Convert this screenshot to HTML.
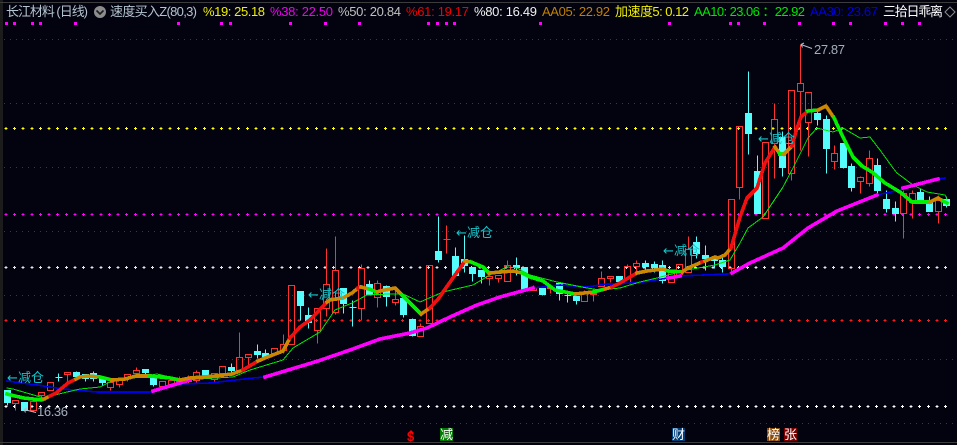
<!DOCTYPE html>
<html lang="zh"><head><meta charset="utf-8"><title>长江材料 (日线)</title>
<style>
html,body{margin:0;padding:0;background:#02030f;}
svg{display:block;position:absolute;left:0;top:0;}
text{font-family:"Liberation Sans","Noto Sans CJK SC",sans-serif;font-size:13px;white-space:pre;}
</style></head>
<body>
<svg width="957" height="445" viewBox="0 0 957 445" xmlns="http://www.w3.org/2000/svg">
<rect width="957" height="445" fill="#02030f"/>
<rect x="0" y="0" width="3" height="445" fill="#1c1c1c"/>
<rect x="0" y="2" width="957" height="1" fill="#3c3c3c"/>
<rect x="0" y="442" width="957" height="1" fill="#3c3c3c"/>

<!-- grid -->
<g stroke="#3a3a3a" stroke-width="1" stroke-dasharray="1 5" shape-rendering="crispEdges">
<path d="M4 39.5H957M4 103.5H957M4 167.5H957M4 231.5H957M4 295.5H957M4 359.5H957M4 423.5H957"/>
</g>

<!-- top markers -->
<path fill="#ff00ff" d="M5 22h3v3h-3zM13 22h3v3h-3zM31 22h3v3h-3zM39 22h3v3h-3zM74 22h3v3h-3zM177 22h3v3h-3zM220 22h3v3h-3zM229 22h3v3h-3zM289 22h3v3h-3zM324 22h3v3h-3zM358 22h3v3h-3zM427 22h3v3h-3zM436 22h3v3h-3zM445 22h3v3h-3zM453 22h3v3h-3zM539 22h3v3h-3zM668 22h3v3h-3zM729 22h3v3h-3zM737 22h3v3h-3zM763 22h3v3h-3zM798 22h3v3h-3zM832 22h3v3h-3zM849 22h3v3h-3zM884 22h3v3h-3zM901 22h3v3h-3zM918 22h3v3h-3z"/>

<!-- cross level lines -->
<g shape-rendering="crispEdges" fill="none">
<g stroke="#ffff00"><path d="M4.5 128.5H950" stroke-dasharray="3 5.62"/><path d="M5.5 128.5H950" stroke-width="3" stroke-dasharray="1 7.62"/></g>
<g stroke="#ff00ff"><path d="M4.5 214.5H950" stroke-dasharray="3 5.62"/><path d="M5.5 214.5H950" stroke-width="3" stroke-dasharray="1 7.62"/></g>
<g stroke="#e6e6e6"><path d="M4.5 267.5H950" stroke-dasharray="3 5.62"/><path d="M5.5 267.5H950" stroke-width="3" stroke-dasharray="1 7.62"/></g>
<g stroke="#ff1a1a"><path d="M4.5 320.5H950" stroke-dasharray="3 5.62"/><path d="M5.5 320.5H950" stroke-width="3" stroke-dasharray="1 7.62"/></g>
<g stroke="#ffffff"><path d="M4.5 406.5H950" stroke-dasharray="3 5.62"/><path d="M5.5 406.5H950" stroke-width="3" stroke-dasharray="1 7.62"/></g>
</g>

<!-- candles -->
<g transform="translate(.5 .5)" shape-rendering="crispEdges">
<path fill="none" stroke="#ff3232" d="
M12 400h6V403h-6zM15 403V410
M30 401h6V410h-6zM33 410V412
M38 392h6V395h-6zM41 395V400
M47 382h6V390h-6z
M64 372h6V374h-6zM67 374V381
M107 382h6V387h-6zM110 380V382M110 387V390
M116 380h6V384h-6zM119 384V387
M124 374h6V378h-6zM127 378V381
M133 370h6V373h-6zM136 367V370M136 373V377
M159 381h6V386h-6zM162 386V388
M168 380h6V384h-6zM171 377V380M171 384V387
M176 379h6V381h-6zM179 376V379M179 381V384
M185 378h6V381h-6zM188 375V378M188 381V384
M193 372h6V380h-6zM196 370V372M196 380V382
M211 373h6V379h-6zM214 379V381
M219 366h6V373h-6z
M236 357h6V370h-6zM239 332V357
M245 354h6V357h-6zM248 357V367
M271 348h6V353h-6z
M280 344h6V350h-6zM283 334V344M283 350V353
M288 285h6V344h-6z
M314 308h6V330h-6zM317 330V343
M323 284h6V308h-6zM326 248V284M326 308V316
M332 270h6V312h-6zM335 236V270M335 312V314
M358 268h6V308h-6zM361 264V268M361 308V320
M374 283h6V297h-6zM377 280V283M377 297V307
M392 299h6V302h-6zM395 287V299M395 302V305
M417 326h6V336h-6zM420 323V326
M426 265h6V323h-6z
M446 225V253M443 239h7
M486 276h6V278h-6zM489 278V285
M495 275h6V278h-6zM498 278V282
M504 265h6V281h-6zM507 260V265
M530 287h6V290h-6zM533 285V287
M547 287h6V288h-6zM550 288V293
M581 292h6V301h-6zM584 290V292
M590 293h6V294h-6zM593 288V293M593 294V301
M598 278h6V286h-6zM601 271V278
M607 276h6V278h-6zM610 278V282
M624 266h6V283h-6zM627 264V266
M633 263h6V266h-6zM636 260V263M636 266V275
M668 272h6V282h-6z
M676 264h6V275h-6z
M685 249h6V272h-6zM688 236V249
M728 199h6V268h-6zM731 268V272
M736 126h6V187h-6zM739 187V199
M762 142h6V218h-6z
M771 119h6V143h-6zM774 103V119M774 143V178
M788 90h6V173h-6zM791 173V180
M797 83h6V91h-6zM800 44V83M800 91V150
M805 92h6V122h-6zM808 122V156
M831 153h6V161h-6zM834 145V153M834 161V169
M857 177h6V181h-6zM860 176V177M860 181V193
M866 158h6V183h-6zM869 150V158M869 183V186
M900 193h6V213h-6zM903 190V193M903 213V238
M909 193h6V202h-6zM912 190V193M912 202V218
M935 200h6V211h-6zM938 195V200M938 211V223"/>
<path fill="#54fcfc" stroke="#54fcfc" d="
M4 390h6V402h-6zM7 402V405
M21 402h6V410h-6z
M58 373V381M55 377h7
M73 372h6V376h-6zM76 371V380
M82 374h6V378h-6zM85 378V381
M90 373h6V378h-6zM93 371V381
M99 378h6V382h-6zM102 382V385
M142 369h6V372h-6zM145 372V376
M150 378h6V384h-6zM153 384V386
M202 370h6V376h-6z
M228 367h6V370h-6zM231 363V372
M254 351h6V354h-6zM257 344V358
M262 353h6V356h-6zM265 349V358
M297 291h6V305h-6zM300 305V320
M305 315h6V322h-6zM308 307V328
M340 288h6V303h-6zM343 303V313
M352 300V326M349 307h7
M366 284h6V294h-6zM369 280V284
M383 286h6V296h-6zM386 285V306
M400 298h6V314h-6zM403 314V317
M409 319h6V335h-6zM412 318V336
M435 251h6V259h-6zM438 216V262
M452 256h6V275h-6zM455 247V256
M461 259h6V265h-6zM464 235V272
M469 267h6V273h-6zM472 273V281
M478 270h6V276h-6zM481 276V283
M513 265h6V267h-6zM516 257V275
M521 267h6V289h-6z
M539 288h6V294h-6zM542 294V295
M556 283h6V293h-6zM559 293V300
M567 290V302M564 295h7
M573 296h6V300h-6zM576 300V304
M616 276h6V281h-6z
M642 263h6V266h-6zM645 260V270
M651 264h6V267h-6zM654 261V272
M659 265h6V280h-6zM662 260V283
M693 242h6V253h-6zM696 236V258
M702 255h6V258h-6zM705 245V270
M711 257h6V260h-6zM714 255V268
M719 260h6V266h-6zM722 256V272
M745 113h6V133h-6zM748 71V154
M754 171h6V213h-6zM757 155V171
M779 137h6V167h-6zM782 131V176
M814 113h6V119h-6zM817 110V125
M823 119h6V148h-6zM826 115V173
M840 143h6V167h-6zM843 167V168
M848 166h6V187h-6zM851 163V191
M874 165h6V190h-6zM877 158V193
M883 199h6V208h-6zM886 190V212
M892 208h6V213h-6zM895 201V221
M917 192h6V200h-6zM920 188V192
M926 202h6V211h-6zM929 196V202
M943 199h6V205h-6zM946 196V207"/>
</g>

<!-- moving averages -->
<g fill="none" stroke-linejoin="round" stroke-linecap="square" shape-rendering="crispEdges">
<polyline stroke="#0000e6" stroke-width="1.6" points="7,381 37,385 63,389 97,392 150,392 153,391 180,384 210,383 253,378 265,377"/>
<polyline stroke="#0000e6" stroke-width="1.6" points="533,288 560,285 587,287 607,284 617,284 643,282 668,278 680,276 727,274 732,273"/>
<polyline stroke="#0000e6" stroke-width="1.6" points="877,195 900,190 903,188 938,179 945,178"/>
<polyline stroke="#00e600" stroke-width="1" points="7,388 13,389 37,396 43,398 63,393 80,389 100,387 110,382 157,374 183,380 233,377 250,370 283,360 293,348 320,332 335,310 352,303 367,295 390,294 403,294 420,302 443,292 473,285 490,275 507,267 517,268 530,275 557,282 587,288 600,290 620,288 640,282 657,278 687,270 715,265 730,260 740,243 748,228 763,217 783,187 793,168 808,138 817,128 833,132 843,128 860,138 870,137 880,150 893,168 897,173 913,185 927,192 945,195 947,199"/>
<g stroke="#ff00ff" stroke-width="3.6">
<polyline points="153,391 190,380"/>
<polyline points="265,377 318,361 350,350 380,339 410,333 427,328 450,317 477,305 500,297 533,288"/>
<polyline points="668,278 680,276"/>
<polyline points="732,273 750,263 783,248 808,228 837,211 877,195"/>
<polyline points="903,188 938,179"/>
</g>
<g stroke-width="3.6">
<polyline stroke="#00f000" points="7,394 15,396 24,398 33,399 41,400 44,399"/>
<polyline stroke="#cc8800" points="44,399 50,396"/>
<polyline stroke="#f01010" points="50,396 56,393 62,388 68,383 76,379"/>
<polyline stroke="#cc8800" points="76,379 80,377 88,376 100,377"/>
<polyline stroke="#00f000" points="100,377 104,378 112,380"/>
<polyline stroke="#cc8800" points="112,380 125,379 136,376 150,376"/>
<polyline stroke="#00f000" points="150,376 170,378 180,380"/>
<polyline stroke="#cc8800" points="180,380 190,378 215,376 232,374 243,370"/>
<polyline stroke="#f01010" points="243,370 258,361"/>
<polyline stroke="#cc8800" points="258,361 265,358 283,351 290,338"/>
<polyline stroke="#f01010" points="290,338 300,327 310,320 327,302"/>
<polyline stroke="#cc8800" points="327,302 330,300 343,298 352,293 358,288"/>
<polyline stroke="#f01010" points="358,288 361,287"/>
<polyline stroke="#cc8800" points="361,287 369,289"/>
<polyline stroke="#00f000" points="369,289 377,292"/>
<polyline stroke="#cc8800" points="377,292 380,291 395,288 402,295"/>
<polyline stroke="#00f000" points="402,295 421,314"/>
<polyline stroke="#cc8800" points="421,314 430,308"/>
<polyline stroke="#f01010" points="430,308 439,298 443,292 465,261"/>
<polyline stroke="#cc8800" points="465,261 471,262"/>
<polyline stroke="#00f000" points="471,262 483,267 489,273"/>
<polyline stroke="#cc8800" points="489,273 513,271 522,273"/>
<polyline stroke="#00f000" points="522,273 530,277 543,281 555,290 575,294"/>
<polyline stroke="#cc8800" points="575,294 593,292"/>
<polyline stroke="#00f000" points="593,292 605,289"/>
<polyline stroke="#cc8800" points="605,289 612,287"/>
<polyline stroke="#f01010" points="612,287 620,283 630,277 637,273"/>
<polyline stroke="#cc8800" points="637,273 647,271 663,269 668,271"/>
<polyline stroke="#00f000" points="668,271 682,272"/>
<polyline stroke="#cc8800" points="682,272 688,268 702,262"/>
<polyline stroke="#f01010" points="702,262 705,261"/>
<polyline stroke="#cc8800" points="705,261 715,257 718,258 725,255 731,248"/>
<polyline stroke="#f01010" points="731,248 740,217 747,198 757,188 765,163 775,147"/>
<polyline stroke="#cc8800" points="775,147 780,154"/>
<polyline stroke="#00f000" points="780,154 784,154"/>
<polyline stroke="#cc8800" points="784,154 792,146"/>
<polyline stroke="#f01010" points="792,146 797,128 801,117 808,111"/>
<polyline stroke="#00f000" points="808,111 818,110"/>
<polyline stroke="#cc8800" points="818,110 826,106 834,118"/>
<polyline stroke="#00f000" points="834,118 843,137 853,157 862,166 872,172 885,183 900,192 912,202 930,202"/>
<polyline stroke="#cc8800" points="930,202 938,198 943,201"/>
<polyline stroke="#00f000" points="943,201 947,203"/>
</g>
</g>

<!-- annotations -->
<g fill="#19c3c8">
<text x="7" y="382" font-family="DejaVu Sans" style="font-family:'DejaVu Sans',sans-serif" textLength="11">←</text><text x="18" y="382" textLength="26">减仓</text>
<text x="308" y="299" style="font-family:'DejaVu Sans',sans-serif" textLength="11">←</text><text x="319" y="299" textLength="26">减仓</text>
<text x="456" y="237" style="font-family:'DejaVu Sans',sans-serif" textLength="11">←</text><text x="467" y="237" textLength="26">减仓</text>
<text x="663" y="255" style="font-family:'DejaVu Sans',sans-serif" textLength="11">←</text><text x="674" y="255" textLength="26">减仓</text>
<text x="758" y="143" style="font-family:'DejaVu Sans',sans-serif" textLength="11">←</text><text x="769" y="143" textLength="26">减仓</text>
</g>
<g fill="none" stroke="#b4bcc8" stroke-width="1">
<path d="M801 44.5l11 4M801 44.5l3-1.5M801 44.5l1.5 3"/>
<path d="M24 409.5l12 3M24 409.5l3-1.5M24 409.5l1.5 3"/>
</g>
<text x="814" y="54" fill="#a4aeba" textLength="31">27.87</text>
<text x="37" y="416" fill="#a4aeba" textLength="31">16.36</text>

<!-- header -->
<text x="6" y="16" fill="#b4c4d0" textLength="82">长江材料 (日线)</text>
<circle cx="100" cy="12" r="6" fill="#8c8c8c"/>
<path d="M96.5 10.5l3.5 3.5 3.5-3.5" fill="none" stroke="#1c1c1c" stroke-width="1.6"/>
<text x="110" y="16" fill="#b4c4d0" textLength="87">速度买入Z(80,3)</text>
<text x="203" y="16" fill="#f0f000" textLength="62">%19: 25.18</text>
<text x="270" y="16" fill="#f000f0" textLength="63">%38: 22.50</text>
<text x="338" y="16" fill="#c0c0c0" textLength="63">%50: 20.84</text>
<text x="406" y="16" fill="#f00000" textLength="63">%61: 19.17</text>
<text x="474" y="16" fill="#f0f0f0" textLength="63">%80: 16.49</text>
<text x="542" y="16" fill="#c08000" textLength="68">AA05: 22.92</text>
<text x="615" y="16" fill="#f0f000" textLength="74">加速度5: 0.12</text>
<text x="694" y="16" fill="#00e600" textLength="111">AA10: 23.06 ：22.92</text>
<text x="810" y="16" fill="#0000e0" textLength="68">AA30: 23.67</text>
<text x="883" y="16" fill="#ffffff" textLength="60">三拾日乖离</text>
<path d="M945 12l5-5 5 5-5 5z" fill="none" stroke="#8c8c8c"/>

<!-- bottom badges -->
<text x="407" y="441" fill="#ff0000" font-weight="bold" textLength="8">$</text>
<path d="M411 430l-3 3h6z" fill="#ff0000"/>
<rect x="440" y="428" width="13" height="13" fill="#007a00"/>
<rect x="672" y="428" width="13" height="13" fill="#003c78"/>
<rect x="767" y="428" width="13" height="13" fill="#8b4a0a"/>
<rect x="784" y="428" width="13" height="13" fill="#7a0000"/>
<g fill="#ffffff">
<text x="440" y="439" textLength="13">减</text>
<text x="672" y="439" textLength="13">财</text>
<text x="767" y="439" textLength="13">榜</text>
<text x="784" y="439" textLength="13">张</text>
</g>
</svg>
</body></html>
